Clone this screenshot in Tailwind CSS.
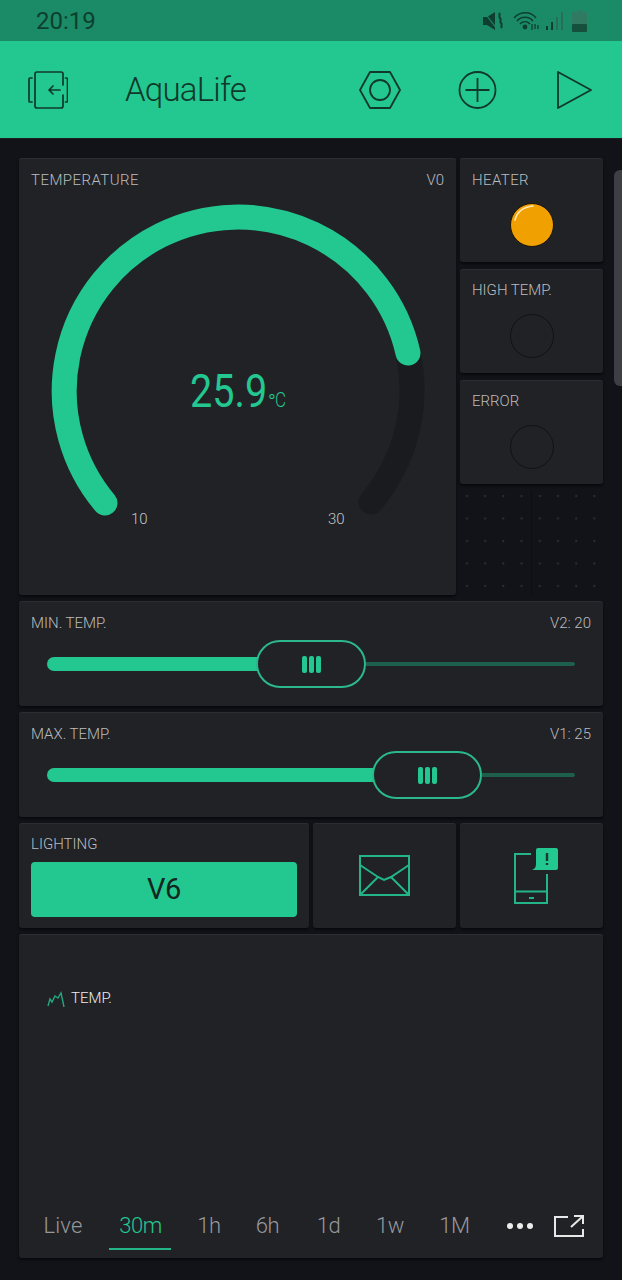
<!DOCTYPE html>
<html lang="en">
<head>
<meta charset="UTF-8">
<title>AquaLife</title>
<script src="https://cdn.jsdelivr.net/npm/@tailwindcss/browser@4"></script>
</head>
<body class="bg-[#121318] font-['Roboto',sans-serif] font-light">
<div class="relative w-[622px] h-[1280px] overflow-hidden">

  <!-- status bar -->
  <div class="h-[41px] bg-[#1b8a66] flex items-center pl-[36px] pr-[35px] text-[#0e3f2e]">
    <span class="text-[24px] font-normal leading-none">20:19</span>
    <div class="ml-auto flex items-center">
      <svg width="22" height="20" viewBox="0 0 22 20" fill="#0e3f2e"><path d="M0 6h4l8-5v18l-8-5H0z"/><path d="M1 1l13 17" stroke="#1b8a66" stroke-width="1.2"/><path d="M16 2c2 2-1 3 1 5s-1 3 1 5-1 3 1 5" fill="none" stroke="#0e3f2e" stroke-width="2"/></svg>
      <svg class="ml-[8px]" width="27" height="20" viewBox="0 0 27 20" fill="none" stroke="#0e3f2e" stroke-width="1.6"><path d="M1 7c6-7 17-7 22 0M4 10c4-5 12-5 16 0M7 13c3-3 7-3 10 0"/><circle cx="12" cy="16" r="1.6" fill="#0e3f2e"/><path d="M19 13v6M22 13v5M25 14v4" stroke-width="1.3"/></svg>
      <svg class="ml-[6px]" width="17" height="20" viewBox="0 0 17 20"><rect x="0" y="15" width="2" height="4" fill="#0e3f2e"/><rect x="5" y="11" width="2" height="8" fill="#0e3f2e"/><rect x="10" y="6" width="2" height="13" fill="#2b6e57"/><rect x="15" y="1" width="2" height="18" fill="#2b6e57"/></svg>
      <svg class="ml-[9px]" width="15" height="22" viewBox="0 0 15 22"><path d="M5 0h5v2h4a1 1 0 0 1 1 1v18a1 1 0 0 1-1 1H1a1 1 0 0 1-1-1V3a1 1 0 0 1 1-1h4z" fill="#2f7a60"/><rect y="14" width="15" height="8" rx="1" fill="#14503c"/></svg>
    </div>
  </div>

  <!-- app bar -->
  <div class="h-[98px] bg-[#23c890] flex items-center border-b border-[#1a1c20]">
    <svg class="ml-[28px]" width="40" height="38" viewBox="0 0 40 38" fill="none" stroke="#11382b" stroke-width="1.7" stroke-linecap="round" stroke-linejoin="round">
      <path d="M4 7H2a1 1 0 0 0-1 1v22a1 1 0 0 0 1 1h2"/>
      <path d="M37.5 7h1a1 1 0 0 1 1 1v22a1 1 0 0 1-1 1h-1"/>
      <path d="M35 14V3a2 2 0 0 0-2-2H9a2 2 0 0 0-2 2v32a2 2 0 0 0 2 2h24a2 2 0 0 0 2-2V24"/>
      <path d="M32 19H21M25 15l-4 4 4 4"/>
    </svg>
    <span class="ml-[57px] text-[33px] leading-none tracking-[-0.8px] text-[#11382b]">AquaLife</span>
    <svg class="ml-auto" width="42" height="38" viewBox="0 0 42 38" fill="none" stroke="#11382b" stroke-width="1.8" stroke-linejoin="round">
      <path d="M11 1h20l10 18-10 18H11L1 19z"/><circle cx="21" cy="19" r="10"/>
    </svg>
    <svg class="ml-[57px]" width="39" height="38" viewBox="0 0 39 38" fill="none" stroke="#11382b" stroke-width="1.8">
      <circle cx="19.5" cy="19" r="18"/><path d="M19.5 7v24M7.5 19h24"/>
    </svg>
    <svg class="ml-[60px] mr-[30px]" width="35" height="38" viewBox="0 0 35 38" fill="none" stroke="#11382b" stroke-width="1.8" stroke-linejoin="round">
      <path d="M1 1l33 18L1 37z"/>
    </svg>
  </div>

  <!-- widgets -->
  <div class="pl-[19px] pt-[19px] w-[603px] flex flex-col gap-[6px]">
    <div class="flex gap-[4px]">
      <!-- gauge -->
      <div class="relative w-[437px] h-[437px] rounded-[3px] bg-[#202226] shadow-[inset_0_1px_0_#2b2d31,0_2px_3px_#09090c]">
        <div class="flex justify-between px-[12px] pt-[13px] text-[15px] leading-[18px] text-[#bbbcbf]"><span class="tracking-[0.45px]">TEMPERATURE</span><span>V0</span></div>
        <svg class="absolute left-0 top-0" width="437" height="437" viewBox="0 0 437 437" fill="none" stroke-width="25" stroke-linecap="round">
          <path d="M389 195A174 174 0 0 1 352 344" stroke="#1a1b1e"/>
          <path d="M86 345A174 174 0 1 1 389 195" stroke="#23c890"/>
        </svg>
        <div class="absolute left-[171px] top-[205px] flex items-baseline text-[#23c890]"><span class="origin-left scale-x-[0.86] -mr-[12px] text-[46px] font-normal leading-[56px]">25.9</span><span class="translate-y-[3px] text-[22px] leading-none">°</span><span class="text-[20px] leading-none origin-left scale-x-[0.85] -ml-[1px]">C</span></div>
        <span class="absolute left-[112px] top-[352px] text-[15px] leading-[18px] text-[#c4c5c8]">10</span>
        <span class="absolute left-[309px] top-[352px] text-[15px] leading-[18px] text-[#c4c5c8]">30</span>
      </div>
      <!-- leds -->
      <div class="w-[143px] flex flex-col gap-[7px]">
        <div class="h-[104px] rounded-[3px] bg-[#202226] shadow-[inset_0_1px_0_#2b2d31,0_2px_3px_#09090c] px-[12px] pt-[13px]">
          <div class="text-[15px] leading-[18px] text-[#bbbcbf] tracking-[0.4px]">HEATER</div>
          <div class="relative mx-auto mt-[14px] w-[44px] h-[44px] rounded-full bg-[#f0a000] border border-[#1a1408]">
            <svg class="absolute left-[2px] top-0" width="24" height="20" viewBox="0 0 24 20" fill="none"><path d="M2 16C4 8 10 3 20 2" stroke="#ffe9b8" stroke-width="1.6" stroke-linecap="round"/></svg>
          </div>
        </div>
        <div class="h-[104px] rounded-[3px] bg-[#202226] shadow-[inset_0_1px_0_#2b2d31,0_2px_3px_#09090c] px-[12px] pt-[12px]">
          <div class="text-[15px] leading-[18px] text-[#bbbcbf]">HIGH TEMP.</div>
          <div class="mx-auto mt-[15px] w-[44px] h-[44px] rounded-full border border-[#111215]"></div>
        </div>
        <div class="h-[104px] rounded-[3px] bg-[#202226] shadow-[inset_0_1px_0_#2b2d31,0_2px_3px_#09090c] px-[12px] pt-[12px]">
          <div class="text-[15px] leading-[18px] text-[#bbbcbf]">ERROR</div>
          <div class="mx-auto mt-[15px] w-[44px] h-[44px] rounded-full border border-[#111215]"></div>
        </div>
        <!-- empty grid -->
        <svg class="-mt-[1px]" width="143" height="105" viewBox="0 0 143 105">
          <defs><pattern id="dots" x="0" y="0" width="18.2" height="22.5" patternUnits="userSpaceOnUse"><circle cx="7" cy="6" r="1" fill="#2f3135"/></pattern></defs>
          <rect width="143" height="105" fill="url(#dots)"/>
          <path d="M71.5 0v105" stroke="#0d0e12" stroke-width="1"/>
        </svg>
      </div>
    </div>

    <!-- sliders -->
    <div class="h-[105px] rounded-[3px] bg-[#202226] shadow-[inset_0_1px_0_#2b2d31,0_2px_3px_#09090c] px-[12px] pt-[13px]">
      <div class="flex justify-between text-[15px] leading-[18px] text-[#bbbcbf]"><span>MIN. TEMP.</span><span>V2: 20</span></div>
      <div class="flex items-center mt-[8px] ml-[16px] w-[528px]">
        <div class="w-[210px] h-[14px] rounded-l-full bg-[#23c890]"></div>
        <div class="-ml-[1px] w-[110px] h-[48px] rounded-full border-2 border-[#2bb88a] bg-[#202226] flex items-center justify-center gap-[2px] shrink-0">
          <div class="w-[5px] h-[17px] rounded-[2px] bg-[#23c890]"></div><div class="w-[5px] h-[17px] rounded-[2px] bg-[#23c890]"></div><div class="w-[5px] h-[17px] rounded-[2px] bg-[#23c890]"></div>
        </div>
        <div class="flex-1 h-[4px] rounded-r-full bg-[#1d5f4b]"></div>
      </div>
    </div>
    <div class="h-[105px] rounded-[3px] bg-[#202226] shadow-[inset_0_1px_0_#2b2d31,0_2px_3px_#09090c] px-[12px] pt-[13px]">
      <div class="flex justify-between text-[15px] leading-[18px] text-[#bbbcbf]"><span>MAX. TEMP.</span><span>V1: 25</span></div>
      <div class="flex items-center mt-[8px] ml-[16px] w-[528px]">
        <div class="w-[326px] h-[14px] rounded-l-full bg-[#23c890]"></div>
        <div class="-ml-[1px] w-[110px] h-[48px] rounded-full border-2 border-[#2bb88a] bg-[#202226] flex items-center justify-center gap-[2px] shrink-0">
          <div class="w-[5px] h-[17px] rounded-[2px] bg-[#23c890]"></div><div class="w-[5px] h-[17px] rounded-[2px] bg-[#23c890]"></div><div class="w-[5px] h-[17px] rounded-[2px] bg-[#23c890]"></div>
        </div>
        <div class="flex-1 h-[4px] rounded-r-full bg-[#1d5f4b]"></div>
      </div>
    </div>

    <!-- button row -->
    <div class="flex gap-[4px]">
      <div class="w-[290px] h-[105px] rounded-[3px] bg-[#202226] shadow-[inset_0_1px_0_#2b2d31,0_2px_3px_#09090c] px-[12px] pt-[12px]">
        <div class="text-[15px] leading-[18px] text-[#bbbcbf]">LIGHTING</div>
        <div class="mt-[9px] w-[266px] h-[55px] rounded-[4px] bg-[#23c890] flex items-center justify-center text-[29px] tracking-[-0.5px] font-normal text-[#13261f]">V6</div>
      </div>
      <div class="w-[143px] h-[105px] rounded-[3px] bg-[#202226] shadow-[inset_0_1px_0_#2b2d31,0_2px_3px_#09090c] flex items-center justify-center">
        <svg width="51" height="41" viewBox="0 0 51 41" fill="none" stroke="#23b585" stroke-width="2">
          <rect x="1" y="1" width="49" height="39"/><path d="M1 10l18 12 6 3 7-3 18-12M1 40l18-18M50 40L32 22"/>
        </svg>
      </div>
      <div class="w-[143px] h-[105px] rounded-[3px] bg-[#202226] shadow-[inset_0_1px_0_#2b2d31,0_2px_3px_#09090c] flex items-center justify-center">
        <svg class="ml-[9px]" width="44" height="56" viewBox="0 0 44 56" fill="none" stroke="#23b585" stroke-width="2">
          <path d="M17 6H1v49h32V26M1 43.5h32M15 50h5"/>
          <path d="M24 0h18a2 2 0 0 1 2 2v18a2 2 0 0 1-2 2H18c3-1 4-3 4-6V2a2 2 0 0 1 2-2z" fill="#23c890" stroke="none"/>
          <path d="M33 5v8M33 15v2" stroke="#1a3a2f" stroke-width="2.4"/>
        </svg>
      </div>
    </div>

    <!-- chart -->
    <div class="h-[324px] rounded-[3px] bg-[#202226] shadow-[inset_0_1px_0_#2b2d31,0_2px_3px_#09090c] flex flex-col">
      <div class="flex items-center pl-[28px] pt-[55px]">
        <svg width="18" height="17" viewBox="0 0 18 17" fill="none" stroke="#23a87c" stroke-width="1.4"><path d="M1 16l2-7 2 3 3-6 3 2 3-5 3 14"/></svg>
        <span class="ml-[6px] text-[15px] leading-[18px] text-[#eeeeef]">TEMP.</span>
      </div>
      <div class="mt-auto flex items-center text-[22px] tracking-[-0.4px] h-[55px] pb-[10px] text-[#97989c]">
        <span class="ml-[24px] w-[40px] flex justify-center tracking-[0.2px]">Live</span>
        <span class="relative ml-[37px] w-[41px] flex justify-center text-[#23c890]">30m<span class="absolute -left-[11px] -right-[10px] -bottom-[8px] h-[2px] bg-[#23b585]"></span></span>
        <span class="ml-[37px] w-[22px] flex justify-center">1h</span>
        <span class="ml-[36px] w-[23px] flex justify-center">6h</span>
        <span class="ml-[39px] w-[21px] flex justify-center">1d</span>
        <span class="ml-[38px] w-[26px] flex justify-center">1w</span>
        <span class="ml-[38px] w-[27px] flex justify-center">1M</span>
        <span class="ml-[39px] flex gap-[4px]"><i class="block w-[6px] h-[6px] rounded-full bg-[#ececec]"></i><i class="block w-[6px] h-[6px] rounded-full bg-[#ececec]"></i><i class="block w-[6px] h-[6px] rounded-full bg-[#ececec]"></i></span>
        <svg class="ml-[21px]" width="30" height="22" viewBox="0 0 30 22" fill="none" stroke="#e8e8e8" stroke-width="2"><path d="M14 2H1v19h28v-7M17 12L28 2M20 1h9v8"/></svg>
      </div>
    </div>
  </div>

  <!-- scrollbar -->
  <div class="absolute left-[614px] top-[170px] w-[8px] h-[216px] rounded-l-[6px] bg-[#3e3f45]"></div>
</div>
</body>
</html>
